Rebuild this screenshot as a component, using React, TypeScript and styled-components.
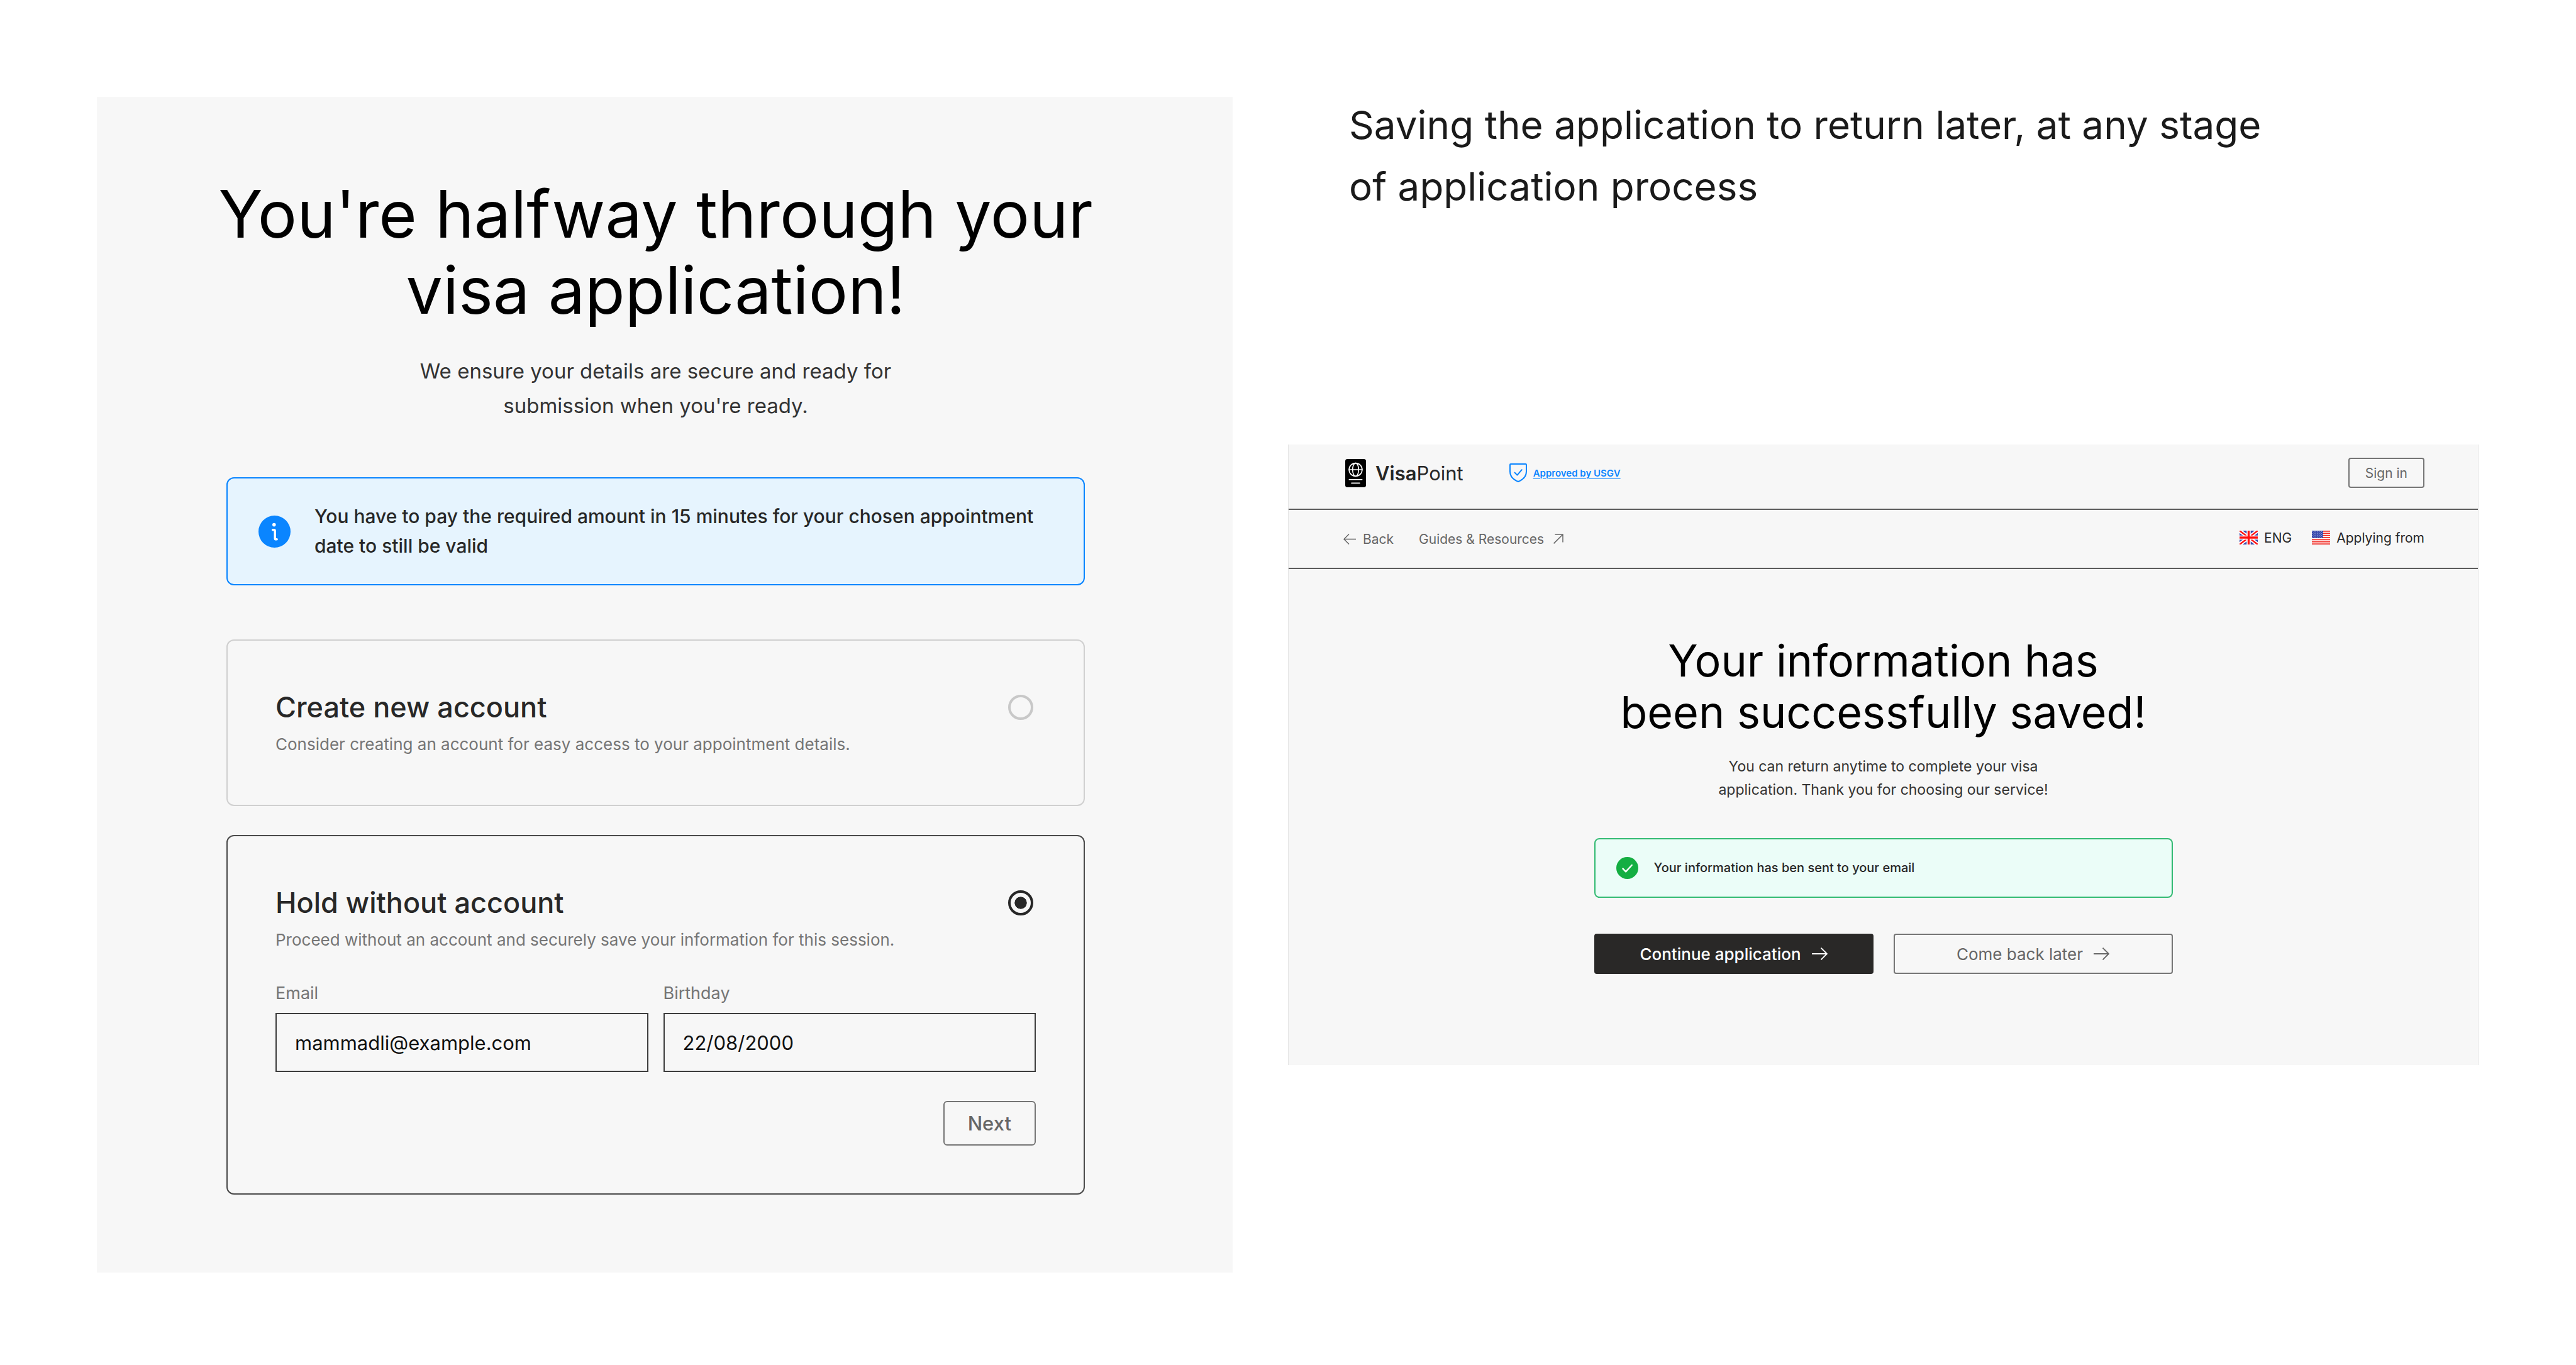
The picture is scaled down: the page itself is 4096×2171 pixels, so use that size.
import React, { useState } from 'react';
import styled, { createGlobalStyle, css } from 'styled-components';

const color = {
  ink: '#272727',
  body: '#333333',
  muted: '#757575',
  grey: '#666666',
  surface: '#f7f7f7',
  blue: '#0a85ff',
  green: '#14ae42',
};

const GlobalStyle = createGlobalStyle`
  *, *::before, *::after { box-sizing: border-box; }
  body {
    margin: 0;
    background: #ffffff;
    color: ${color.ink};
    font-family: Inter, "Liberation Sans", sans-serif;
  }
  h1, h2, h3, p { margin: 0; font-weight: 400; }
  a { color: inherit; text-decoration: none; }
  button, input { font-family: inherit; }
  svg { display: block; flex: none; }
`;

const Page = styled.div`
  display: grid;
  grid-template-columns: minmax(0, 1806fr) minmax(0, 1893fr);
  column-gap: 88px;
  align-items: start;
  padding: 0 155px 148px 154px;
`;

const LeftColumn = styled.main`
  padding-top: 154px;
`;

const RightColumn = styled.section`
  display: flex;
  flex-direction: column;
  gap: 361px;
  padding-top: 150px;
`;

const HoldPanel = styled.section`
  display: flex;
  flex-direction: column;
  background: ${color.surface};
  padding: 126px 235px 124px 206px;
`;

const Title = styled.h1`
  align-self: center;
  color: #000000;
  font-size: 104px;
  line-height: 121px;
  text-align: center;
  white-space: nowrap;
`;

const Lead = styled.p`
  margin-top: 41px;
  color: ${color.body};
  font-size: 33px;
  line-height: 55px;
  text-align: center;
`;

const Notice = styled.div<{ $tone: 'info' | 'success' }>`
  display: flex;
  align-items: center;
  border: 2px solid;
  color: ${color.ink};
  ${({ $tone }) =>
    $tone === 'info'
      ? css`
          gap: 38px;
          margin-top: 86px;
          padding: 37px 49px;
          border-color: ${color.blue};
          border-radius: 12px;
          background: #e6f4fe;
          font-size: 30px;
          line-height: 47px;
        `
      : css`
          gap: 25px;
          padding: 28px 33px;
          border-color: #33ba72;
          border-radius: 8px;
          background: #ebfdf8;
          font-size: 20px;
          line-height: 35px;
        `}
`;

const NoticeText = styled.p`
  font-weight: 500;
  white-space: nowrap;
`;

const Options = styled.form`
  display: flex;
  flex-direction: column;
  gap: 46px;
  margin-top: 86px;
`;

const OptionCard = styled.div<{ $active: boolean }>`
  padding: 76px;
  border: 2px solid ${({ $active }) => ($active ? '#4a4a4a' : '#d0d0d0')};
  border-radius: 12px;
`;

const OptionHead = styled.div`
  display: flex;
  align-items: center;
  justify-content: space-between;
  padding-right: 4px;
`;

const OptionTitle = styled.label`
  color: ${color.ink};
  font-size: 45px;
  font-weight: 500;
  line-height: 60px;
`;

const OptionText = styled.p`
  margin-top: 8px;
  color: ${color.muted};
  font-size: 26px;
  line-height: 41px;
`;

const Radio = styled.input`
  appearance: none;
  width: 40px;
  height: 40px;
  margin: 0;
  padding: 6px;
  border: 4px solid #c8c8c8;
  border-radius: 50%;
  background-clip: content-box;

  &:checked {
    border-color: ${color.ink};
    background-image: radial-gradient(circle closest-side, ${color.ink} 94%, transparent 100%);
    background-origin: content-box;
  }
`;

const Fields = styled.div`
  display: grid;
  grid-template-columns: 1fr 1fr;
  gap: 24px;
  margin-top: 44px;
`;

const Field = styled.div`
  display: flex;
  flex-direction: column;
  gap: 10px;
`;

const FieldLabel = styled.label`
  color: ${color.muted};
  font-size: 27px;
  line-height: 42px;
`;

const TextBox = styled.input`
  width: 100%;
  height: 94px;
  padding: 0 29px;
  border: 2px solid #3d3d3d;
  border-radius: 0;
  background: transparent;
  color: #111111;
  font-size: 31px;
`;

const Actions = styled.div`
  display: flex;
  justify-content: flex-end;
  margin-top: 46px;
`;

const buttonBase = css`
  display: flex;
  align-items: center;
  justify-content: center;
  border: 2px solid #757575;
  background: transparent;
  color: ${color.grey};
`;

const NextButton = styled.button`
  ${buttonBase}
  height: 71px;
  padding: 0 37px;
  border-radius: 6px;
  font-size: 31px;
  font-weight: 500;
`;

const Caption = styled.h2`
  padding-left: 97px;
  color: #1a1a1a;
  font-size: 62px;
  line-height: 98px;
`;

const SavedPanel = styled.article`
  border: solid #e4e4e4;
  border-width: 0 1px;
  background: ${color.surface};
`;

const TopBar = styled.header`
  display: flex;
  align-items: center;
  justify-content: space-between;
  padding: 21px 85px 33px 90px;
  border-bottom: 2px solid #5c5c5c;
`;

const BrandGroup = styled.div`
  display: flex;
  align-items: center;
  gap: 73px;
`;

const Brand = styled.a`
  display: flex;
  align-items: center;
  gap: 15px;
  font-size: 31px;
  line-height: 45px;
`;

const BrandStrong = styled.strong`
  font-weight: 600;
`;

const Approved = styled.a`
  display: flex;
  align-items: center;
  gap: 10px;
  color: ${color.blue};
  font-size: 15px;
  font-weight: 600;
`;

const Underlined = styled.span`
  text-decoration: underline;
  text-decoration-thickness: 1px;
  text-underline-offset: 3px;
`;

const SignInButton = styled.button`
  ${buttonBase}
  height: 48px;
  padding: 0 25px;
  border-radius: 4px;
  font-size: 21px;
`;

const NavBar = styled.nav`
  display: flex;
  align-items: center;
  justify-content: space-between;
  height: 94px;
  padding: 0 85px 0 87px;
  border-bottom: 2px solid #5c5c5c;
  font-size: 21px;
`;

const NavLinks = styled.div`
  display: flex;
  gap: 40px;
  color: ${color.grey};
`;

const NavLink = styled.a<{ $gap: number }>`
  display: flex;
  align-items: center;
  gap: ${({ $gap }) => $gap}px;
`;

const Locale = styled.div`
  display: flex;
  gap: 32px;
  padding-bottom: 4px;
`;

const LocaleButton = styled.button`
  display: flex;
  align-items: center;
  gap: 10px;
  padding: 0;
  border: 0;
  background: none;
  color: ${color.ink};
  font-size: 21px;
`;

const SavedBody = styled.div`
  display: flex;
  flex-direction: column;
  width: 100%;
  max-width: 920px;
  margin: 0 auto;
  padding: 105px 0 145px;
`;

const SavedTitle = styled.h2`
  color: #000000;
  font-size: 70px;
  line-height: 82px;
  text-align: center;
`;

const SavedLead = styled.p`
  margin: 27px 0 58px;
  color: ${color.body};
  font-size: 23px;
  line-height: 37px;
  text-align: center;
`;

const Choices = styled.div`
  display: grid;
  grid-template-columns: 1fr 1fr;
  gap: 32px;
  margin-top: 57px;
`;

const ChoiceButton = styled.button<{ $primary?: boolean }>`
  ${buttonBase}
  gap: 17px;
  height: 64px;
  border-radius: 4px;
  font-size: 26px;
  font-weight: ${({ $primary }) => ($primary ? 500 : 400)};
  ${({ $primary }) =>
    $primary &&
    css`
      border-color: #292827;
      background: #292827;
      color: #ffffff;
    `}
`;

const InfoIcon = () => (
  <svg width="51" height="51" viewBox="0 0 51 51" aria-hidden="true">
    <circle cx="25.5" cy="25.5" r="25.5" fill={color.blue} />
    <circle cx="24.8" cy="14.6" r="2.8" fill="#fff" />
    <path d="M22.6 22.8h2.2q1.4 0 1.4 1.4v12.2q0 1.4 1.4 1.4h1.6" fill="none" stroke="#fff" strokeWidth="3.4" strokeLinecap="round" />
  </svg>
);

const CheckIcon = () => (
  <svg width="35" height="35" viewBox="0 0 35 35" aria-hidden="true">
    <circle cx="17.5" cy="17.5" r="17.5" fill={color.green} />
    <path d="M10.5 18.6l4.6 4.8 9.6-10.4" fill="none" stroke="#fff" strokeWidth="2.4" strokeLinecap="round" strokeLinejoin="round" />
  </svg>
);

const PassportLogo = () => (
  <svg width="33" height="45" viewBox="0 0 33 45" aria-hidden="true">
    <rect width="33" height="45" rx="3.5" fill="#000" />
    <g fill="none" stroke="#fff" strokeWidth="1.6" strokeLinecap="round">
      <circle cx="16.5" cy="17" r="10.4" />
      <ellipse cx="16.5" cy="17" rx="4.8" ry="10.4" />
      <path d="M6.1 17h20.8M6.3 32.8h20.4M10 38.4h13" />
    </g>
  </svg>
);

const ShieldIcon = () => (
  <svg width="28" height="30" viewBox="0 0 28 30" fill="none" stroke={color.blue} strokeWidth="2" strokeLinecap="round" strokeLinejoin="round" aria-hidden="true">
    <path d="M2.2 1h23.6q1.2 0 1.2 1.2V13c0 8-5.4 13-13 16C6.4 26 1 21 1 13V2.2Q1 1 2.2 1z" />
    <path d="M8.5 14.6l3.9 4 7.4-8.4" />
  </svg>
);

const ArrowLeft = () => (
  <svg width="20" height="17" viewBox="0 0 20 17" fill="none" stroke="currentColor" strokeWidth="1.5" aria-hidden="true">
    <path d="M20 8.5H1M9 .5l-8 8 8 8" />
  </svg>
);

const ArrowUpRight = () => (
  <svg width="16" height="16" viewBox="0 0 16 16" fill="none" stroke="currentColor" strokeWidth="1.5" aria-hidden="true">
    <path d="M.6 15.4L15 1M2.5 1H15v12.5" />
  </svg>
);

const ArrowRight = () => (
  <svg width="25" height="20" viewBox="0 0 25 20" fill="none" stroke="currentColor" strokeWidth="1.8" aria-hidden="true">
    <path d="M0 10h24M14.5.6l9.5 9.4-9.5 9.4" />
  </svg>
);

const UkFlag = () => (
  <svg width="29" height="22" viewBox="0 0 29 22" aria-hidden="true">
    <clipPath id="uk-clip"><path d="M0 0h29v22H0z" /></clipPath>
    <g clipPath="url(#uk-clip)">
      <path fill="#3748ac" d="M0 0h29v22H0z" />
      <path d="M0 0l29 22M29 0L0 22" stroke="#fff" strokeWidth="6" />
      <path d="M0 0l29 22M29 0L0 22" stroke="#ff1010" strokeWidth="2.4" />
      <path d="M14.5 0v22M0 11h29" stroke="#fff" strokeWidth="6.4" />
      <path d="M14.5 0v22M0 11h29" stroke="#ff1010" strokeWidth="3.4" />
    </g>
  </svg>
);

const STRIPE = 22 / 13;

const UsFlag = () => (
  <svg width="29" height="22" viewBox="0 0 29 22" aria-hidden="true">
    <path fill="#fff" d="M0 0h29v22H0z" />
    {[0, 2, 4, 6, 8, 10, 12].map((n) => (
      <rect key={n} y={n * STRIPE} width="29" height={STRIPE} fill="#f0261f" />
    ))}
    <rect width="18" height={STRIPE * 7} fill="#3748ac" />
    {[0, 1, 2, 3, 4, 5, 6].flatMap((row) =>
      [0, 1, 2, 3, 4].map((col) => (
        <circle key={`${row}-${col}`} cx={1.6 + col * 3.4 + (row % 2) * 1.4} cy={1.4 + row * 1.5} r="0.5" fill="#cfd4f2" />
      )),
    )}
  </svg>
);

export default function App() {
  const [choice, setChoice] = useState('hold');
  const [email, setEmail] = useState('mammadli@example.com');
  const [birthday, setBirthday] = useState('22/08/2000');

  return (
    <>
      <GlobalStyle />
      <Page>
        <LeftColumn>
          <HoldPanel>
            <Title>
              You're halfway through your
              <br />
              visa application!
            </Title>
            <Lead>
              We ensure your details are secure and ready for
              <br />
              submission when you're ready.
            </Lead>
            <Notice $tone="info">
              <InfoIcon />
              <NoticeText>
                You have to pay the required amount in 15 minutes for your chosen appointment
                <br />
                date to still be valid
              </NoticeText>
            </Notice>
            <Options onSubmit={(e) => e.preventDefault()}>
              <OptionCard $active={choice === 'create'}>
                <OptionHead>
                  <OptionTitle htmlFor="create">Create new account</OptionTitle>
                  <Radio type="radio" name="mode" id="create" checked={choice === 'create'} onChange={() => setChoice('create')} />
                </OptionHead>
                <OptionText>Consider creating an account for easy access to your appointment details.</OptionText>
              </OptionCard>
              <OptionCard $active={choice === 'hold'}>
                <OptionHead>
                  <OptionTitle htmlFor="hold">Hold without account</OptionTitle>
                  <Radio type="radio" name="mode" id="hold" checked={choice === 'hold'} onChange={() => setChoice('hold')} />
                </OptionHead>
                <OptionText>Proceed without an account and securely save your information for this session.</OptionText>
                <Fields>
                  <Field>
                    <FieldLabel htmlFor="email">Email</FieldLabel>
                    <TextBox id="email" type="email" value={email} onChange={(e) => setEmail(e.target.value)} />
                  </Field>
                  <Field>
                    <FieldLabel htmlFor="birthday">Birthday</FieldLabel>
                    <TextBox id="birthday" type="text" value={birthday} onChange={(e) => setBirthday(e.target.value)} />
                  </Field>
                </Fields>
                <Actions>
                  <NextButton type="submit">Next</NextButton>
                </Actions>
              </OptionCard>
            </Options>
          </HoldPanel>
        </LeftColumn>

        <RightColumn>
          <Caption>
            Saving the application to return later, at any stage
            <br />
            of application process
          </Caption>
          <SavedPanel>
            <TopBar>
              <BrandGroup>
                <Brand href="#home">
                  <PassportLogo />
                  <span>
                    <BrandStrong>Visa</BrandStrong>Point
                  </span>
                </Brand>
                <Approved href="#approved">
                  <ShieldIcon />
                  <Underlined>Approved by USGV</Underlined>
                </Approved>
              </BrandGroup>
              <SignInButton type="button">Sign in</SignInButton>
            </TopBar>
            <NavBar>
              <NavLinks>
                <NavLink href="#back" $gap={11}>
                  <ArrowLeft />
                  Back
                </NavLink>
                <NavLink href="#guides" $gap={15}>
                  Guides &amp; Resources
                  <ArrowUpRight />
                </NavLink>
              </NavLinks>
              <Locale>
                <LocaleButton type="button">
                  <UkFlag />
                  ENG
                </LocaleButton>
                <LocaleButton type="button">
                  <UsFlag />
                  Applying from
                </LocaleButton>
              </Locale>
            </NavBar>
            <SavedBody>
              <SavedTitle>
                Your information has
                <br />
                been successfully saved!
              </SavedTitle>
              <SavedLead>
                You can return anytime to complete your visa
                <br />
                application. Thank you for choosing our service!
              </SavedLead>
              <Notice $tone="success">
                <CheckIcon />
                <NoticeText>Your information has ben sent to your email</NoticeText>
              </Notice>
              <Choices>
                <ChoiceButton type="button" $primary>
                  Continue application
                  <ArrowRight />
                </ChoiceButton>
                <ChoiceButton type="button">
                  Come back later
                  <ArrowRight />
                </ChoiceButton>
              </Choices>
            </SavedBody>
          </SavedPanel>
        </RightColumn>
      </Page>
    </>
  );
}
